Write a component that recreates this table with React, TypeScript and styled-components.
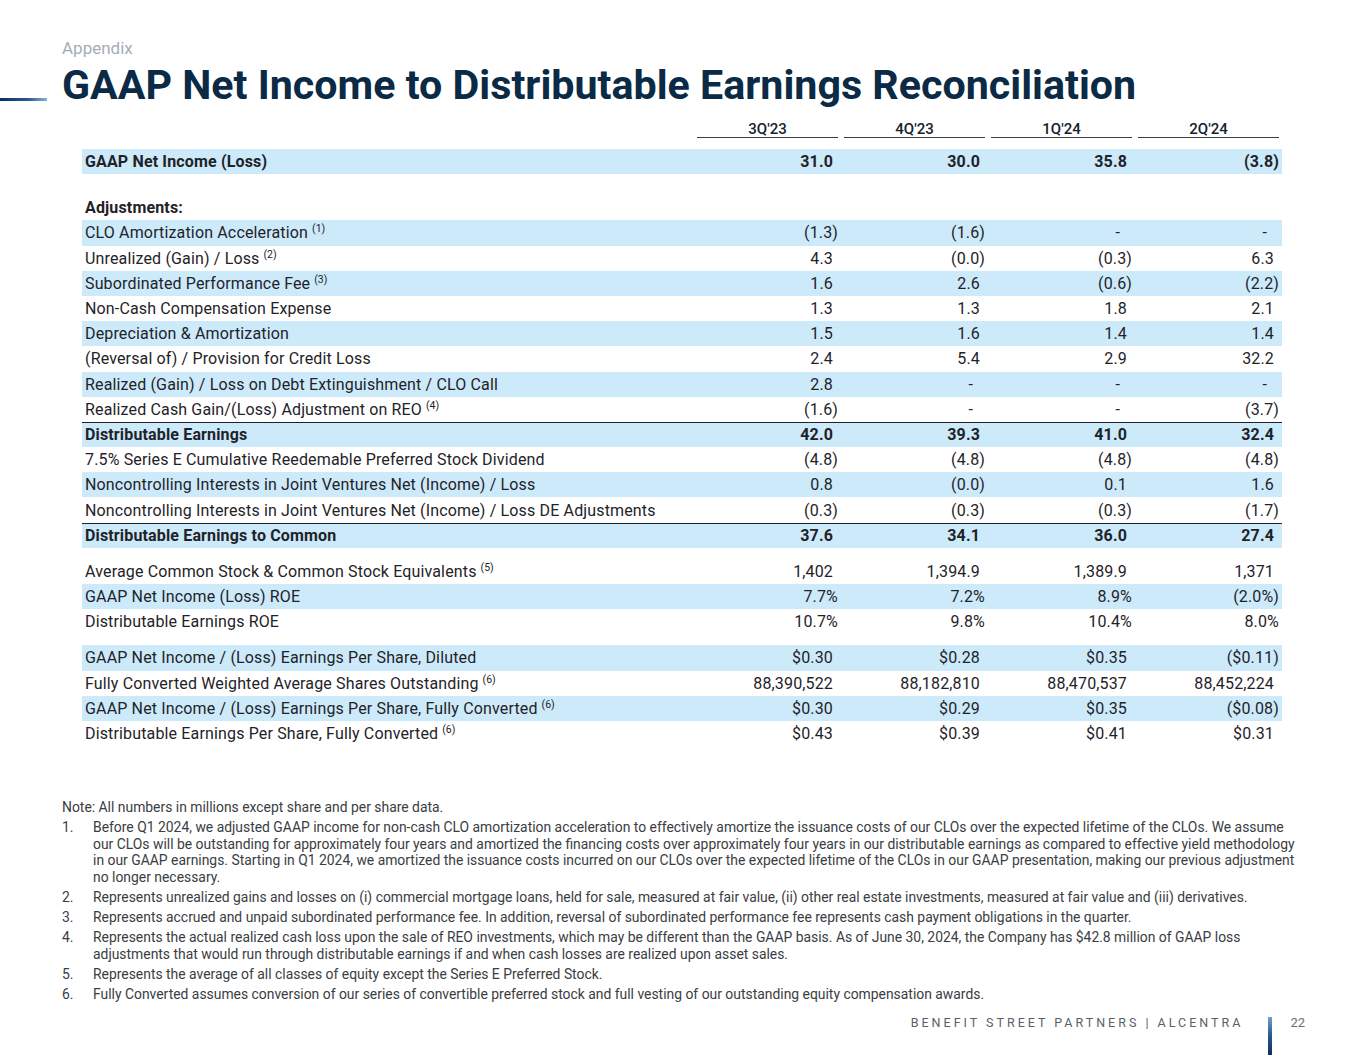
import React from "react";
import styled, { createGlobalStyle } from "styled-components";

const Global = createGlobalStyle`
  html, body { margin: 0; padding: 0; background: #fff; }
  body { font-family: Roboto, "Liberation Sans", sans-serif; color: #1f2328; }
`;

const Page = styled.div`
  width: 1365px;
  height: 1055px;
  display: flex;
  flex-direction: column;
  overflow: hidden;
`;

const Header = styled.header`
  padding-top: 37px;
  display: flex;
  flex-direction: column;
`;

const Eyebrow = styled.div`
  padding-left: 62px;
  font-size: 17px;
  line-height: 22px;
  color: #a5adb6;
`;

const TitleRow = styled.div`
  display: flex;
  align-items: flex-end;
  gap: 15px;
  margin-top: 2px;
`;

const TitleRule = styled.span`
  width: 47px;
  height: 3px;
  margin-bottom: 8px;
  background: linear-gradient(90deg, #0b2f5c 0%, #2a5c8f 60%, #8fb1d3 100%);
`;

const Title = styled.h1`
  margin: 0;
  font-size: 41.2px;
  line-height: 48px;
  font-weight: 700;
  color: #0b2a45;
`;

const Table = styled.div`
  margin: 3px 0 0 82px;
  width: 1200px;
  display: flex;
  flex-direction: column;
`;

const cols = "609px repeat(4, 141px) 3px";

const HeadRow = styled.div`
  display: grid;
  grid-template-columns: ${cols};
  column-gap: 6px;
  height: 26px;
  align-items: end;
  margin-bottom: 11px;
`;

const HeadCell = styled.div<{ $col: number }>`
  grid-column: ${(p) => p.$col + 2};
  text-align: center;
  font-size: 15px;
  font-weight: 500;
  color: #16222e;
  border-bottom: 1px solid #3a3f45;
  padding-bottom: 0px;
  line-height: 15px;
`;

const Row = styled.div<{ $shade?: boolean; $bold?: boolean; $rule?: boolean; $gap?: number }>`
  display: grid;
  grid-template-columns: ${cols};
  column-gap: 6px;
  align-items: center;
  height: 25.2px;
  box-sizing: border-box;
  margin-top: ${(p) => p.$gap ?? 0}px;
  background: ${(p) => (p.$shade ? "#cdeafb" : "transparent")};
  border-top: ${(p) => (p.$rule ? "1.5px solid #1e2328" : "none")};
  font-size: 16px;
  letter-spacing: 0.15px;
  font-weight: ${(p) => (p.$bold ? 700 : 400)};
  color: #1f2328;
`;

const Label = styled.div`
  padding-left: 3px;
  white-space: nowrap;
`;

const Sup = styled.sup`
  font-size: 10.5px;
  margin-left: 4px;
  vertical-align: 6px;
  line-height: 0;
  letter-spacing: 0;
`;

const Value = styled.div<{ $pad: number }>`
  text-align: right;
  padding-right: ${(p) => p.$pad}px;
  white-space: nowrap;
`;

const Notes = styled.section`
  margin: 53px 0 0 62px;
  width: 1240px;
  font-size: 13.9px;
  line-height: 16.6px;
  color: #3a3d42;
  display: flex;
  flex-direction: column;
  gap: 3.5px;
`;

const NoteItem = styled.div`
  display: grid;
  grid-template-columns: 31px 1fr;
`;

const Footer = styled.footer`
  margin-top: auto;
  display: flex;
  align-items: flex-start;
  justify-content: flex-end;
  padding-right: 60px;
  height: 38px;
`;

const Brand = styled.div`
  font-size: 12.5px;
  letter-spacing: 3px;
  color: #5a5f66;
  line-height: 12px;
`;

const Bar = styled.span`
  width: 4px;
  height: 38px;
  margin: 0 18px 0 25px;
  background: linear-gradient(180deg, #7a9fc6 0%, #2c5d92 45%, #0d2f57 100%);
`;

const PageNum = styled.div`
  font-size: 13px;
  line-height: 12px;
  color: #6a6f75;
`;

type R = {
  label: string;
  sup?: string;
  v: string[];
  shade?: boolean;
  bold?: boolean;
  rule?: boolean;
  gap?: number;
};

const rows: R[] = [
  { label: "GAAP Net Income (Loss)", v: ["31.0", "30.0", "35.8", "(3.8)"], shade: true, bold: true },
  { label: "Adjustments:", v: ["", "", "", ""], bold: true, gap: 21 },
  { label: "CLO Amortization Acceleration", sup: "(1)", v: ["(1.3)", "(1.6)", "-", "-"], shade: true },
  { label: "Unrealized (Gain) / Loss", sup: "(2)", v: ["4.3", "(0.0)", "(0.3)", "6.3"] },
  { label: "Subordinated Performance Fee", sup: "(3)", v: ["1.6", "2.6", "(0.6)", "(2.2)"], shade: true },
  { label: "Non-Cash Compensation Expense", v: ["1.3", "1.3", "1.8", "2.1"] },
  { label: "Depreciation & Amortization", v: ["1.5", "1.6", "1.4", "1.4"], shade: true },
  { label: "(Reversal of) / Provision for Credit Loss", v: ["2.4", "5.4", "2.9", "32.2"] },
  { label: "Realized (Gain) / Loss on Debt Extinguishment / CLO Call", v: ["2.8", "-", "-", "-"], shade: true },
  { label: "Realized Cash Gain/(Loss) Adjustment on REO", sup: "(4)", v: ["(1.6)", "-", "-", "(3.7)"] },
  { label: "Distributable Earnings", v: ["42.0", "39.3", "41.0", "32.4"], shade: true, bold: true, rule: true },
  { label: "7.5% Series E Cumulative Reedemable Preferred Stock Dividend", v: ["(4.8)", "(4.8)", "(4.8)", "(4.8)"] },
  { label: "Noncontrolling Interests in Joint  Ventures Net (Income) / Loss", v: ["0.8", "(0.0)", "0.1", "1.6"], shade: true },
  { label: "Noncontrolling Interests in Joint Ventures Net (Income) / Loss DE Adjustments", v: ["(0.3)", "(0.3)", "(0.3)", "(1.7)"] },
  { label: "Distributable Earnings to Common", v: ["37.6", "34.1", "36.0", "27.4"], shade: true, bold: true, rule: true },
  { label: "Average Common Stock & Common Stock Equivalents", sup: "(5)", v: ["1,402", "1,394.9", "1,389.9", "1,371"], gap: 11 },
  { label: "GAAP Net Income (Loss) ROE", v: ["7.7%", "7.2%", "8.9%", "(2.0%)"], shade: true },
  { label: "Distributable Earnings ROE", v: ["10.7%", "9.8%", "10.4%", "8.0%"] },
  { label: "GAAP Net Income / (Loss) Earnings Per Share, Diluted", v: ["$0.30", "$0.28", "$0.35", "($0.11)"], shade: true, gap: 11 },
  { label: "Fully Converted Weighted Average Shares Outstanding", sup: "(6)", v: ["88,390,522", "88,182,810", "88,470,537", "88,452,224"] },
  { label: "GAAP Net Income / (Loss) Earnings Per Share, Fully Converted", sup: "(6)", v: ["$0.30", "$0.29", "$0.35", "($0.08)"], shade: true },
  { label: "Distributable Earnings Per Share, Fully Converted", sup: "(6)", v: ["$0.43", "$0.39", "$0.41", "$0.31"] },
];

const padFor = (s: string) => {
  if (s === "-") return 12;
  if (s.endsWith(")") || s.endsWith("%")) return 0;
  return 5;
};

const notes = [
  "Before Q1 2024, we adjusted GAAP income for non-cash CLO amortization acceleration to effectively amortize the issuance costs of our CLOs over the expected lifetime of the CLOs. We assume our CLOs will be outstanding for approximately four years and amortized the financing costs over approximately four years in our distributable earnings as compared to effective yield methodology in our GAAP earnings. Starting in Q1 2024, we amortized the issuance costs incurred on our CLOs over the expected lifetime of the CLOs in our GAAP presentation, making our previous adjustment no longer necessary.",
  "Represents unrealized gains and losses on (i) commercial mortgage loans, held for sale, measured at fair value, (ii) other real estate investments, measured at fair value and (iii) derivatives.",
  "Represents accrued and unpaid subordinated performance fee. In addition, reversal of subordinated performance fee represents cash payment obligations in the quarter.",
  "Represents the actual realized cash loss upon the sale of REO investments, which may be different than the GAAP basis. As of June 30, 2024, the Company has $42.8 million of GAAP loss adjustments that would run through distributable earnings if and when cash losses are realized upon asset sales.",
  "Represents the average of all classes of equity except the Series E Preferred Stock.",
  "Fully Converted assumes conversion of our series of convertible preferred stock and full vesting of our outstanding equity compensation awards.",
];

export default function App() {
  return (
    <Page>
      <Global />
      <Header>
        <Eyebrow>Appendix</Eyebrow>
        <TitleRow>
          <TitleRule />
          <Title>GAAP Net Income to Distributable Earnings Reconciliation</Title>
        </TitleRow>
      </Header>
      <Table>
        <HeadRow>
          {["3Q'23", "4Q'23", "1Q'24", "2Q'24"].map((h, i) => (
            <HeadCell key={h} $col={i}>
              {h}
            </HeadCell>
          ))}
        </HeadRow>
        {rows.map((r) => (
          <Row key={r.label} $shade={r.shade} $bold={r.bold} $rule={r.rule} $gap={r.gap}>
            <Label>
              {r.label}
              {r.sup && <Sup>{r.sup}</Sup>}
            </Label>
            {r.v.map((v, i) => (
              <Value key={i} $pad={padFor(v)}>
                {v}
              </Value>
            ))}
          </Row>
        ))}
      </Table>
      <Notes>
        <div>Note: All numbers in millions except share and per share data.</div>
        {notes.map((n, i) => (
          <NoteItem key={i}>
            <span>{i + 1}.</span>
            <span>{n}</span>
          </NoteItem>
        ))}
      </Notes>
      <Footer>
        <Brand>BENEFIT STREET PARTNERS | ALCENTRA</Brand>
        <Bar />
        <PageNum>22</PageNum>
      </Footer>
    </Page>
  );
}
